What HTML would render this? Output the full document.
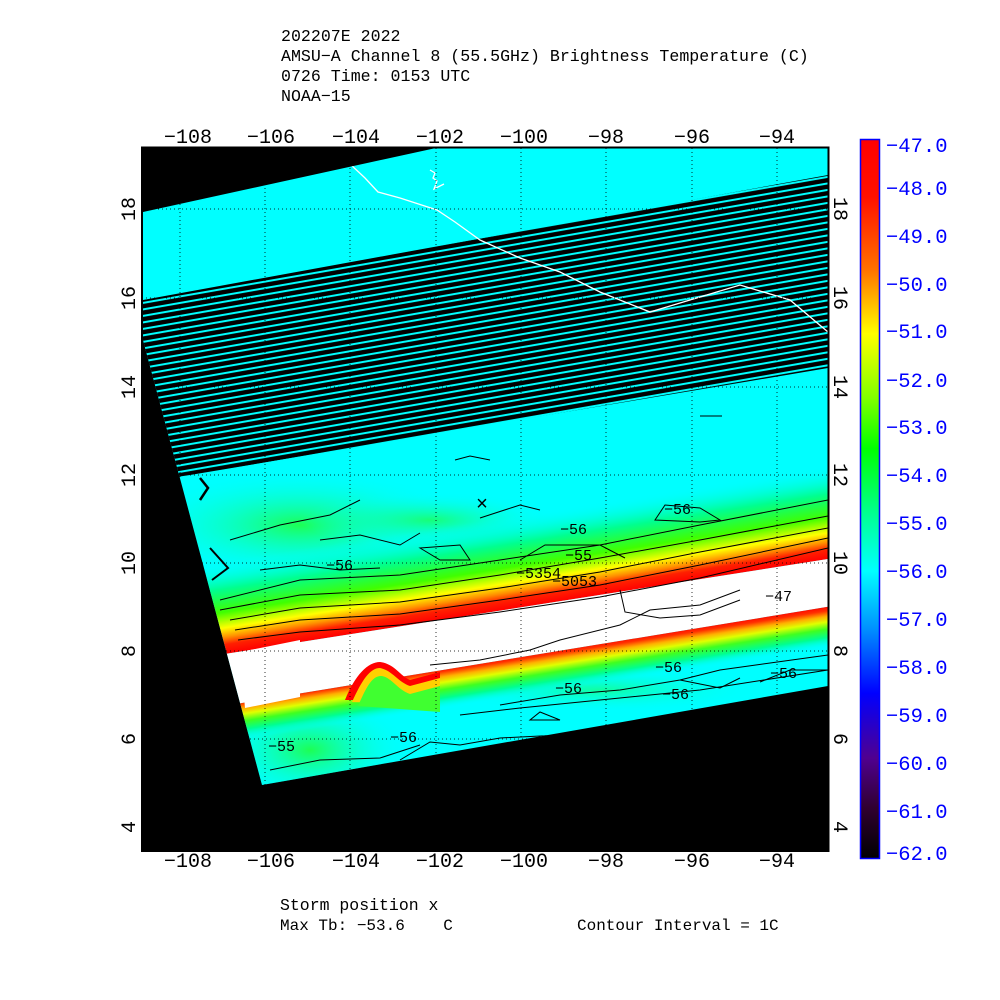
<!DOCTYPE html>
<html><head><meta charset="utf-8"><style>
html,body{margin:0;padding:0;background:#fff;width:1000px;height:1000px;overflow:hidden}
svg{display:block}
text{font-family:"Liberation Mono",monospace}
</style></head><body>
<svg width="1000" height="1000" viewBox="0 0 1000 1000" xmlns="http://www.w3.org/2000/svg">
<defs>
<clipPath id="plot"><rect x="142" y="148" width="686" height="703"/></clipPath>
<clipPath id="data"><polygon points="143,212 436,148 828,148 828,686 262,785 143,340"/></clipPath>
<clipPath id="strp"><polygon points="143,300 828,175 828,368 190,475 143,482"/></clipPath>
<pattern id="stripes" width="40" height="6.4" patternUnits="userSpaceOnUse" patternTransform="rotate(-9.9)">
<rect width="40" height="6.4" fill="#000"/><rect y="2" width="40" height="2" fill="#00ffff"/></pattern>
<linearGradient id="up" x1="0" y1="560" x2="0" y2="652" gradientUnits="userSpaceOnUse">
<stop offset="0" stop-color="#00ffff" stop-opacity="0"/>
<stop offset="0.3" stop-color="#00ff90"/>
<stop offset="0.55" stop-color="#40ff00"/>
<stop offset="0.72" stop-color="#ffff00"/>
<stop offset="0.82" stop-color="#ff9000"/>
<stop offset="0.9" stop-color="#ff2000"/>
<stop offset="1" stop-color="#ff0000"/>
</linearGradient>
<linearGradient id="lo" x1="0" y1="698" x2="0" y2="740" gradientUnits="userSpaceOnUse">
<stop offset="0" stop-color="#ff0000"/>
<stop offset="0.12" stop-color="#ff3000"/>
<stop offset="0.25" stop-color="#ffb000"/>
<stop offset="0.38" stop-color="#e0ff00"/>
<stop offset="0.55" stop-color="#40ff20"/>
<stop offset="0.75" stop-color="#00ff90"/>
<stop offset="1" stop-color="#00ffff" stop-opacity="0"/>
</linearGradient>
<radialGradient id="gl" cx="0.5" cy="0.5" r="0.5">
<stop offset="0" stop-color="#20ff40"/><stop offset="1" stop-color="#00ffff" stop-opacity="0"/>
</radialGradient>
<linearGradient id="cb" x1="0" y1="0" x2="0" y2="1">
<stop offset="0" stop-color="#ff0000"/>
<stop offset="0.08" stop-color="#ff1000"/>
<stop offset="0.18" stop-color="#ff7000"/>
<stop offset="0.27" stop-color="#ffff00"/>
<stop offset="0.36" stop-color="#80ff00"/>
<stop offset="0.43" stop-color="#00ff00"/>
<stop offset="0.52" stop-color="#00ff90"/>
<stop offset="0.60" stop-color="#00ffff"/>
<stop offset="0.68" stop-color="#0090ff"/>
<stop offset="0.77" stop-color="#0000ff"/>
<stop offset="0.86" stop-color="#500090"/>
<stop offset="0.93" stop-color="#300030"/>
<stop offset="1" stop-color="#000000"/>
</linearGradient>
</defs>

<g font-size="16.6" fill="#000">
<text x="281" y="41">202207E 2022</text>
<text x="281" y="61">AMSU−A Channel 8 (55.5GHz) Brightness Temperature (C)</text>
<text x="281" y="81">0726 Time: 0153 UTC</text>
<text x="281" y="101">NOAA−15</text>
</g>

<rect x="142" y="148" width="686" height="703" fill="#000"/>
<g clip-path="url(#plot)">
<g clip-path="url(#data)">
<rect x="142" y="148" width="686" height="703" fill="#00ffff"/>
<ellipse cx="300" cy="525" rx="170" ry="55" fill="url(#gl)" opacity="0.9"/>
<ellipse cx="430" cy="520" rx="130" ry="28" fill="url(#gl)" opacity="0.7"/>
<ellipse cx="310" cy="750" rx="100" ry="55" fill="url(#gl)" opacity="0.9"/>
<ellipse cx="600" cy="690" rx="160" ry="22" fill="url(#gl)" opacity="0.5"/>
<g transform="rotate(-8.94 237 650)">
<rect x="100" y="560" width="900" height="92" fill="url(#up)"/>
<polygon points="100,652 1000,652 1000,698 100,704" fill="#fff"/>
<polygon points="100,704 1000,698 1000,745 100,750" fill="url(#lo)"/>
</g>
<path d="M345,700 C355,675 368,662 380,662 C395,664 400,676 410,680 L440,672 L440,700 Z" fill="#ff0000"/>
<path d="M352,702 C362,680 370,668 380,668 C392,670 398,682 410,686 L440,678 L440,705 Z" fill="#ffd000"/>
<path d="M358,706 C366,688 372,675 382,676 C392,678 398,690 410,694 L440,686 L440,712 Z" fill="#40ff30"/>
<path d="M240,652 L300,640 L300,697 L245,708 Z" fill="#fff"/>
<rect x="142" y="148" width="686" height="703" fill="url(#stripes)" clip-path="url(#strp)"/>
<polyline points="310,150 330,155 349,163 365,178 378,192 400,198 437,210 455,222 480,240 520,258 560,272 600,292 650,312 690,300 740,285 790,300 828,332" fill="none" stroke="#fff" stroke-width="1.3"/>
<path d="M430,170 l5,3 l-2,5 l4,3 l-3,8 l10,-5" fill="none" stroke="#fff" stroke-width="1.3"/>
<g fill="none" stroke="#000" stroke-width="1">
<path d="M655,520 L665,505 L700,508 L720,520 L700,522 Z"/>
<path d="M480,518 L520,505 L540,510"/>
<path d="M520,560 L545,545 L600,545 L625,558"/>
<path d="M420,548 L440,560 L470,560 L460,545 Z"/>
<path d="M320,540 L360,535 L400,545 L420,533"/>
<path d="M230,540 L280,525 L330,515 L360,500"/>
<path d="M260,570 L300,565 L340,570 L380,568"/>
<path d="M220,600 L300,580 L400,575 L500,560 L600,545 L700,525 L828,500"/>
<path d="M220,610 L300,595 L400,590 L500,575 L600,558 L700,540 L828,516"/>
<path d="M230,620 L300,608 L400,602 L500,588 L600,572 L700,552 L828,528"/>
<path d="M235,630 L300,620 L400,614 L500,600 L600,585 L700,565 L828,538"/>
<path d="M238,640 L300,632 L400,625 L500,612 L600,597 L700,578 L828,548"/>
<path d="M430,665 L480,660 L530,650 L560,640 L620,625 L650,610 L700,605 L740,590"/>
<path d="M620,590 L625,612 L660,618 L700,615 L740,600"/>
<path d="M500,705 L560,695 L620,690 L680,680 L720,670 L828,655"/>
<path d="M460,715 L520,708 L600,700 L700,690 L828,670"/>
<path d="M530,720 L560,720 L540,712 Z"/>
<path d="M400,760 L430,742 L460,745 L500,738 L560,735"/>
<path d="M270,770 L320,760 L380,758 L420,745"/>
<path d="M680,680 L720,688 L740,678"/>
<path d="M760,682 L790,670 L828,670"/>
<path d="M700,416 L722,416"/>
<path d="M455,460 L470,456 L490,460"/>
<path d="M200,478 L208,488 L200,500" stroke-width="2.5"/>
<path d="M210,548 L228,568 L212,580" stroke-width="2"/>
</g>
<g font-size="15" fill="#000">
<text x="664" y="514">−56</text>
<text x="560" y="534">−56</text>
<text x="565" y="560">−55</text>
<text x="326" y="570">−56</text>
<text x="516" y="578">−5354</text>
<text x="552" y="586">−5053</text>
<text x="655" y="672">−56</text>
<text x="555" y="693">−56</text>
<text x="662" y="699">−56</text>
<text x="770" y="678">−56</text>
<text x="390" y="742">−56</text>
<text x="268" y="751">−55</text>
<text x="765" y="601">−47</text>
<text x="476" y="510" font-size="20">×</text>
</g>
</g>
<g stroke="#000" stroke-width="1" stroke-dasharray="1,3" opacity="0.8">
<line x1="180" y1="148" x2="180" y2="851"/><line x1="265" y1="148" x2="265" y2="851"/>
<line x1="350" y1="148" x2="350" y2="851"/><line x1="436" y1="148" x2="436" y2="851"/>
<line x1="521" y1="148" x2="521" y2="851"/><line x1="606" y1="148" x2="606" y2="851"/>
<line x1="692" y1="148" x2="692" y2="851"/><line x1="777" y1="148" x2="777" y2="851"/>
<line x1="142" y1="209" x2="828" y2="209"/><line x1="142" y1="298" x2="828" y2="298"/>
<line x1="142" y1="387" x2="828" y2="387"/><line x1="142" y1="475" x2="828" y2="475"/>
<line x1="142" y1="563" x2="828" y2="563"/><line x1="142" y1="651" x2="828" y2="651"/>
<line x1="142" y1="739" x2="828" y2="739"/><line x1="142" y1="827" x2="828" y2="827"/>
</g>
</g>
<rect x="142" y="147.5" width="686.5" height="703.5" fill="none" stroke="#000" stroke-width="2"/>

<g font-size="20" fill="#000" text-anchor="middle">
<text x="188" y="143">−108</text><text x="271" y="143">−106</text><text x="356" y="143">−104</text><text x="440" y="143">−102</text>
<text x="524" y="143">−100</text><text x="606" y="143">−98</text><text x="692" y="143">−96</text><text x="777" y="143">−94</text>
<text x="188" y="867">−108</text><text x="271" y="867">−106</text><text x="356" y="867">−104</text><text x="440" y="867">−102</text>
<text x="524" y="867">−100</text><text x="606" y="867">−98</text><text x="692" y="867">−96</text><text x="777" y="867">−94</text>
<text transform="translate(135,209) rotate(-90)">18</text><text transform="translate(135,298) rotate(-90)">16</text>
<text transform="translate(135,387) rotate(-90)">14</text><text transform="translate(135,475) rotate(-90)">12</text>
<text transform="translate(135,563) rotate(-90)">10</text><text transform="translate(135,651) rotate(-90)">8</text>
<text transform="translate(135,739) rotate(-90)">6</text><text transform="translate(135,827) rotate(-90)">4</text>
<text transform="translate(834,209) rotate(90)">18</text><text transform="translate(834,298) rotate(90)">16</text>
<text transform="translate(834,387) rotate(90)">14</text><text transform="translate(834,475) rotate(90)">12</text>
<text transform="translate(834,563) rotate(90)">10</text><text transform="translate(834,651) rotate(90)">8</text>
<text transform="translate(834,739) rotate(90)">6</text><text transform="translate(834,827) rotate(90)">4</text>
</g>

<rect x="860.5" y="139.5" width="19" height="719" fill="url(#cb)" stroke="#0000ff" stroke-width="1.5"/>
<g font-size="20.5" fill="#0000ff">
<text x="886" y="152">−47.0</text><text x="886" y="195">−48.0</text><text x="886" y="243">−49.0</text>
<text x="886" y="291">−50.0</text><text x="886" y="338">−51.0</text><text x="886" y="387">−52.0</text>
<text x="886" y="434">−53.0</text><text x="886" y="482">−54.0</text><text x="886" y="530">−55.0</text>
<text x="886" y="578">−56.0</text><text x="886" y="626">−57.0</text><text x="886" y="674">−58.0</text>
<text x="886" y="722">−59.0</text><text x="886" y="770">−60.0</text><text x="886" y="818">−61.0</text>
<text x="886" y="860">−62.0</text>
</g>

<text x="280" y="910" font-size="16.5" fill="#000">Storm position x</text>
<text x="280" y="930" font-size="16" fill="#000" xml:space="preserve">Max Tb: −53.6    C</text>
<text x="577" y="930" font-size="16" fill="#000">Contour Interval = 1C</text>
</svg>
</body></html>
